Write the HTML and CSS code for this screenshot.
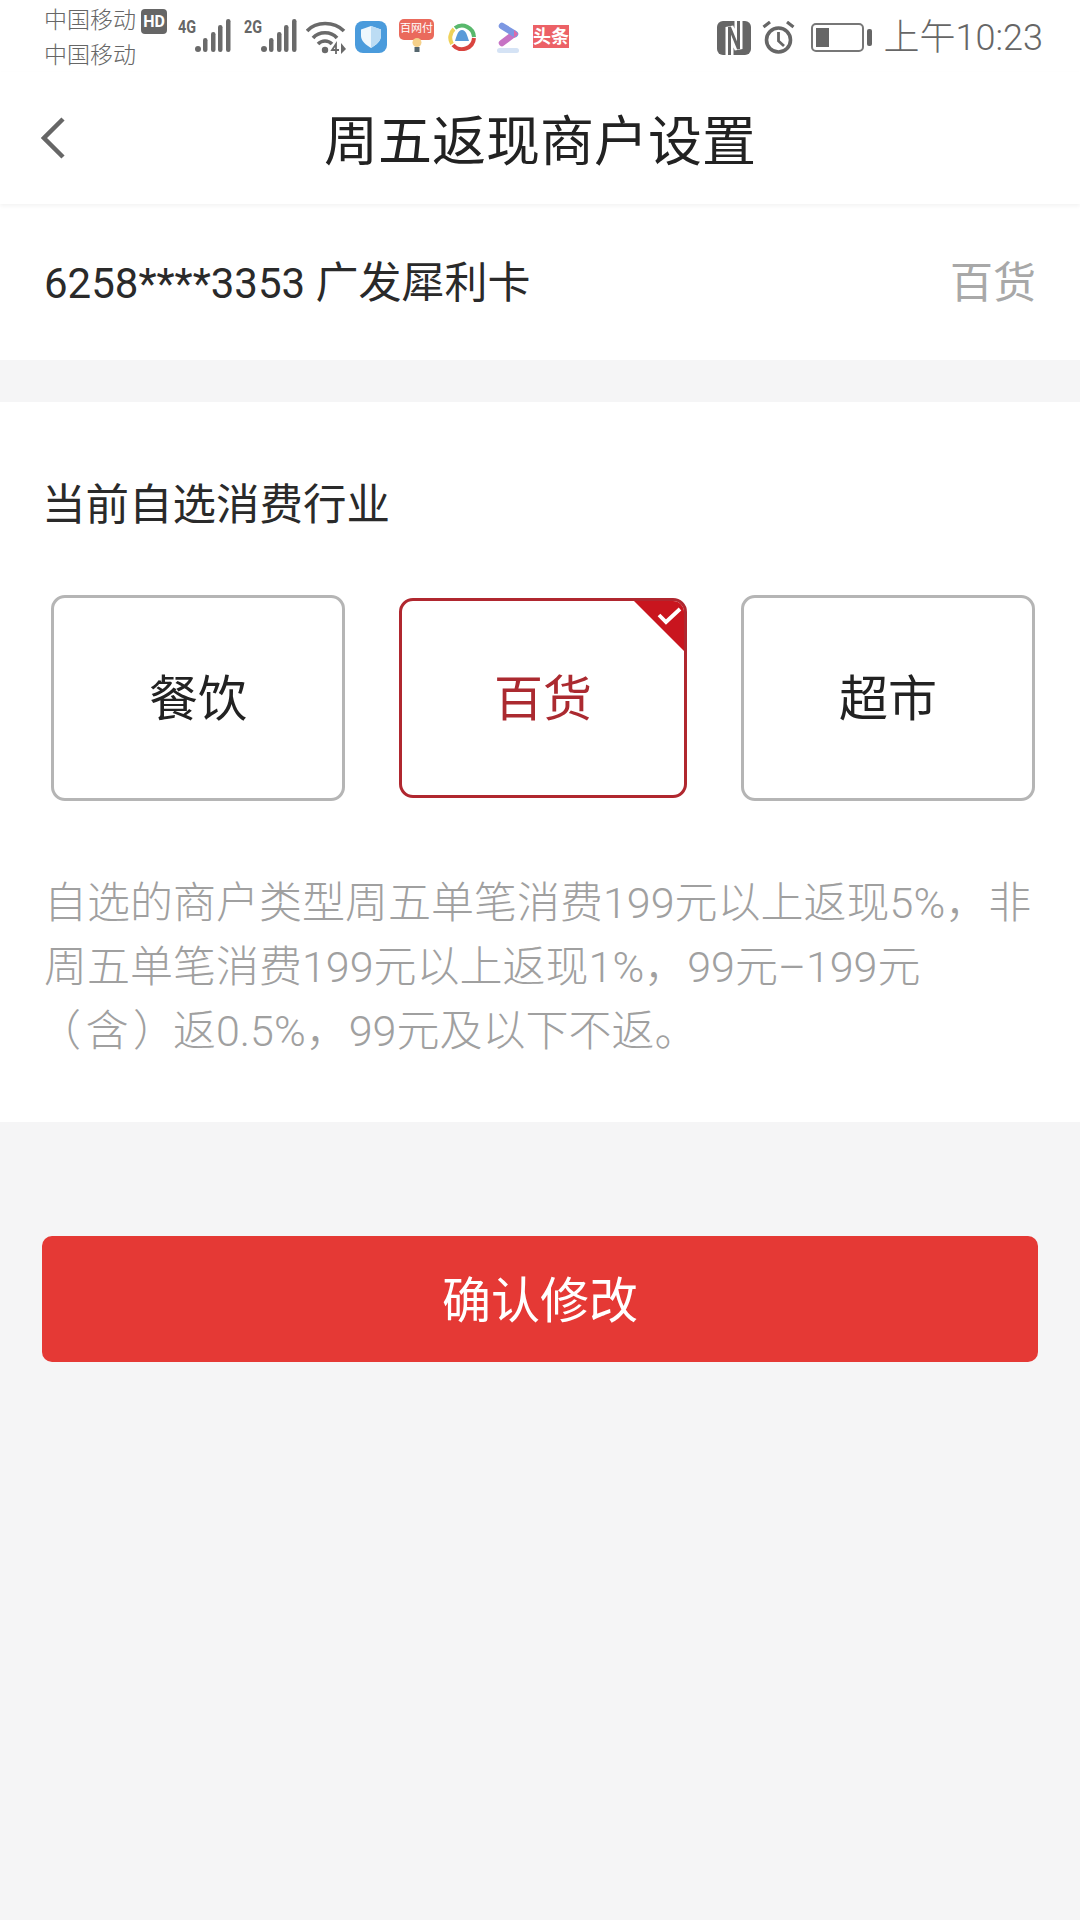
FILE: index.html
```html
<!DOCTYPE html>
<html lang="zh-CN">
<head>
    <meta charset="UTF-8">
    <meta name="viewport" content="width=device-width, initial-scale=1.0">
    <title>周五返现商户设置</title>
    <link rel="stylesheet" href="styles.css">
</head>
<body>
    <!-- Status bar -->
    <div class="status-bar">
        <div class="carriers">
            <div class="carrier-line">中国移动<span class="hd">HD</span></div>
            <div class="carrier-line">中国移动</div>
        </div>
        <div class="signal">
            <span class="net">4G</span>
            <svg width="36" height="33" viewBox="0 0 36 33"><g fill="#6a6a6a"><circle cx="3" cy="30" r="3"/><rect x="8" y="19" width="4.500" height="14" rx="2.200"/><rect x="16" y="13" width="4.500" height="20" rx="2.200"/><rect x="23" y="6" width="4.500" height="27" rx="2.200"/><rect x="31" y="0" width="4.500" height="33" rx="2.200"/></g></svg>
        </div>
        <div class="signal signal-two">
            <span class="net">2G</span>
            <svg width="36" height="33" viewBox="0 0 36 33"><g fill="#6a6a6a"><circle cx="3" cy="30" r="3"/><rect x="8" y="19" width="4.500" height="14" rx="2.200"/><rect x="16" y="13" width="4.500" height="20" rx="2.200"/><rect x="23" y="6" width="4.500" height="27" rx="2.200"/><rect x="31" y="0" width="4.500" height="33" rx="2.200"/></g></svg>
        </div>
        <svg class="wifi" width="40" height="33" viewBox="0 0 40 33"><g fill="none" stroke="#6a6a6a" stroke-width="3.600"><path d="M1 10 C10 0 28 0 38 10"/><path d="M7 17 C13 10 25 10 31 17"/><path d="M12 23 C16 19 22 19 26 23"/></g><circle cx="19" cy="29" r="3.200" fill="#6a6a6a"/><path d="M30 33 V23 L26 29 H33" fill="none" stroke="#6a6a6a" stroke-width="1.800"/><path d="M35 22 L40 28 L35 33 Z" fill="#6a6a6a"/></svg>
        <div class="app-icons">
            <div class="app-shield">
                <svg width="20" height="22" viewBox="0 0 20 22"><path d="M10 0 L20 3.500 V10 C20 15 15 19 10 22 C5 19 0 15 0 10 V3.500 Z" fill="#eef7fd"/><path d="M10 0 L20 3.500 V10 C20 15 15 19 10 22 Z" fill="#bcdcf4"/></svg>
            </div>
            <div class="app-baifu">
                <span class="baifu-label">百网付</span>
                <svg width="12" height="14" viewBox="0 0 12 14"><circle cx="6" cy="4.500" r="4.500" fill="#f5d08a"/><rect x="3.500" y="9" width="5" height="5" fill="#55666e"/></svg>
            </div>
            <svg class="app-circle" width="28" height="28" viewBox="0 0 28 28"><g fill="none" stroke-width="4"><path d="M7 5 A12 12 0 0 1 26 14" stroke="#59b86c"/><path d="M26 15 A12 12 0 0 1 5 22" stroke="#d9443f"/><path d="M4 21 A12 12 0 0 1 6 6" stroke="#efd25a"/></g><path d="M14 7 C18 7 19 12 21 18 H7 C9 12 10 7 14 7 Z" fill="#5a9bd8"/></svg>
            <svg class="app-play" width="36" height="36" viewBox="0 0 36 36"><g fill="none" stroke-width="6.500" stroke-linecap="round"><path d="M12 25 L24 16" stroke="#c673c4"/><path d="M12 8 L25 16" stroke="#7c97e2"/></g><path d="M24 12 L28 16 L24 20 Z" fill="#dd6aa8"/><rect x="7" y="30" width="22" height="5" rx="2.500" fill="#d5e3f5"/></svg>
            <div class="app-toutiao">头条</div>
        </div>
        <div class="status-right">
            <svg width="34" height="34" viewBox="0 0 34 34"><rect width="34" height="34" rx="6" fill="#666"/><path d="M12.500 34 V6 L21.500 28 V0" fill="none" stroke="#fff" stroke-width="8"/><path d="M12.500 34 V6 L21.500 28 V0" fill="none" stroke="#666" stroke-width="3"/></svg>
            <svg class="alarm" width="34" height="33" viewBox="0 0 34 33"><g fill="none" stroke="#666"><circle cx="16.500" cy="19" r="12" stroke-width="3.600"/><path d="M16.500 11 V20 L22 25" stroke-width="2.800"/><path d="M1.500 6 L8 1 M31.500 6 L25 1" stroke-width="3.200"/></g></svg>
            <div class="battery"><div class="battery-body"><div class="battery-level"></div></div><div class="battery-tip"></div></div>
            <span class="clock">上午10:23</span>
        </div>
    </div>

    <!-- Nav bar -->
    <header class="nav-bar">
        <svg class="back" width="24" height="42" viewBox="0 0 24 42"><path d="M22 2 L3 21 L22 40" fill="none" stroke="#666" stroke-width="4.500"/></svg>
        <h1 class="nav-title">周五返现商户设置</h1>
    </header>

    <div class="card-row">
        <span class="card-name">6258****3353 <span class="card-bank">广发犀利卡</span></span>
        <span class="card-type">百货</span>
    </div>

    <section class="panel">
        <h2 class="panel-title">当前自选消费行业</h2>
        <div class="options">
            <div class="option">餐饮</div>
            <div class="option selected">
                百货
                <span class="corner">
                    <svg width="25" height="19" viewBox="0 0 25 19"><path d="M2 9 L9 16 L23 3" fill="none" stroke="#fff" stroke-width="3.800"/></svg>
                </span>
            </div>
            <div class="option">超市</div>
        </div>
        <p class="desc">自选的商户类型周五单笔消费199元以上返现5%，非<br>周五单笔消费199元以上返现1%，99元–199元<br><span class="paren">（ 含 ）</span>返0.5%，99元及以下不返。</p>
    </section>

    <button class="confirm">确认修改</button>
</body>
</html>
```

FILE: styles.css
```css
* {
    margin: 0;
    padding: 0;
    box-sizing: border-box;
    font-family: Roboto, 'Noto Sans CJK SC', sans-serif;
}

body {
    width: 1080px;
    height: 1920px;
    background: #f5f5f6;
    overflow: hidden;
}

/* Status bar */
.status-bar {
    height: 72px;
    background: #fff;
    display: flex;
    align-items: flex-start;
    padding: 5px 37px 0 44px;
    color: #666;
}

.carriers {
    width: 134px;
    flex-shrink: 0;
}

.carrier-line {
    display: flex;
    align-items: center;
    height: 32px;
    margin-bottom: 3px;
    font-size: 23px;
    font-weight: 300;
    line-height: 32px;
}

.hd {
    background: #666;
    color: #fff;
    border-radius: 4px;
    font-size: 16px;
    font-weight: 700;
    width: 26px;
    height: 25px;
    line-height: 25px;
    text-align: center;
    margin-left: 5px;
}

.signal {
    display: flex;
    align-items: flex-start;
    margin-top: 14px;
}

.signal-two {
    margin-left: 13px;
}

.net {
    font-size: 18px;
    font-weight: 700;
    width: 17px;
    line-height: 15px;
    transform: scaleX(0.8);
    transform-origin: left top;
}

.wifi {
    margin: 16px 0 0 9px;
}

.app-icons {
    display: flex;
    align-items: flex-start;
    margin-left: 9px;
}

.app-shield {
    width: 32px;
    height: 32px;
    border-radius: 8px;
    margin-top: 16px;
    background: #4a9bdc;
    display: flex;
    align-items: center;
    justify-content: center;
}

.app-baifu {
    width: 35px;
    margin: 14px 0 0 12px;
    display: flex;
    flex-direction: column;
    align-items: center;
}

.baifu-label {
    display: block;
    width: 35px;
    height: 21px;
    background: #ea6a5c;
    color: #fff;
    border-radius: 5px;
    font-size: 11px;
    line-height: 20px;
    text-align: center;
    white-space: nowrap;
    margin-bottom: -2px;
}

.app-circle {
    margin: 18px 0 0 14px;
}

.app-play {
    margin: 13px 0 0 14px;
}

.app-toutiao {
    width: 36px;
    height: 23px;
    margin: 20px 0 0 7px;
    background: #ec6166;
    color: #fff;
    font-size: 18px;
    font-weight: 700;
    line-height: 23px;
    text-align: center;
    white-space: nowrap;
}

.status-right {
    margin-left: auto;
    display: flex;
    align-items: center;
    height: 65px;
}

.alarm {
    margin-left: 11px;
}

.battery {
    display: flex;
    align-items: center;
    margin: 0 12px 0 15px;
}

.battery-body {
    width: 53px;
    height: 29px;
    border: 2px solid #777;
    border-radius: 5px;
    padding: 3px;
}

.battery-level {
    width: 13px;
    height: 100%;
    background: #666;
}

.battery-tip {
    width: 5px;
    height: 17px;
    background: #666;
    border-radius: 2px;
    margin-left: 3px;
}

.clock {
    font-size: 36px;
    font-weight: 300;
    line-height: 40px;
}

/* Nav bar */
.nav-bar {
    height: 132px;
    background: #fff;
    display: flex;
    align-items: center;
    justify-content: center;
    position: relative;
    box-shadow: 0 2px 4px rgba(0, 0, 0, 0.05);
    z-index: 1;
}

.back {
    position: absolute;
    left: 41px;
    top: 45px;
}

.nav-title {
    font-size: 54px;
    font-weight: 400;
    color: #222;
    padding-bottom: 2px;
}

/* Card row */
.card-row {
    height: 156px;
    background: #fff;
    display: flex;
    align-items: center;
    justify-content: space-between;
    padding: 0 44px 7px;
    font-size: 43px;
    margin-bottom: 42px;
}

.card-name {
    font-size: 42px;
    color: #2a2a2a;
}

.card-bank {
    font-size: 43px;
}

.card-type {
    color: #a8a8a8;
}

/* Industry panel */
.panel {
    height: 720px;
    background: #fff;
    padding: 69px 44px 0;
}

.panel-title {
    font-size: 43.5px;
    font-weight: 400;
    line-height: 70px;
    color: #2a2a2a;
    margin-left: -2px;
}

.options {
    display: flex;
    align-items: center;
    gap: 54px;
    margin: 54px 0 0 7px;
}

.option {
    width: 294px;
    height: 206px;
    flex-shrink: 0;
    border: 3px solid #b5b5b5;
    border-radius: 14px;
    display: flex;
    align-items: center;
    justify-content: center;
    padding-bottom: 8px;
    font-size: 49px;
    color: #222;
    position: relative;
    overflow: hidden;
}

.option.selected {
    width: 288px;
    height: 200px;
    border-color: #b0272f;
    color: #ab2a30;
}

.corner {
    position: absolute;
    top: -3px;
    right: -3px;
    width: 56px;
    height: 56px;
    background: #c9151e;
    clip-path: polygon(0 0, 100% 0, 100% 100%);
}

.corner svg {
    position: absolute;
    top: 8px;
    right: 5px;
}

.desc {
    font-size: 43px;
    font-weight: 300;
    line-height: 64px;
    color: #a0a0a0;
    margin-top: 70px;
    white-space: nowrap;
}

.paren {
    margin-left: -6px;
    letter-spacing: -3px;
}

/* Confirm button */
.confirm {
    display: block;
    width: 996px;
    height: 126px;
    margin: 114px 0 0 42px;
    padding-bottom: 6px;
    background: #e53935;
    color: #fff;
    border: none;
    border-radius: 10px;
    font-size: 49px;
}
```
